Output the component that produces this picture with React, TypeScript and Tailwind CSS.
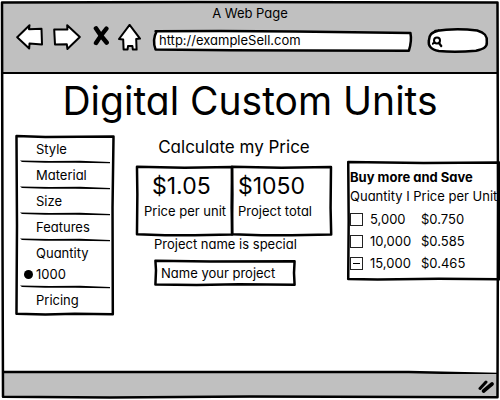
import { useEffect, useRef } from "react";
import type { ReactNode } from "react";

const FRAMES = {
  page: "M0.4 0.6 L40 0.5 L99.5 0.6 L99.6 50 L99.5 99.3 L50 99.1 L22 99.4 L0.6 99.2 L0.5 60 Z",
  menu: "M0.5 0.6 L30 1.1 L99.5 0.8 L98.5 40 L98.8 99 L60 98.8 L30 99.2 L0.5 98.8 L1 50 Z",
  card: "M1 1.2 L50 2.4 L99 1.5 L98.6 60 L99.2 98 L60 98.8 L30 99 L1 97.6 L1.4 40 Z",
  field: "M1 3 L40 6 L99 5 L98.6 50 L99 95 L60 93 L30 96 L1 94 L1.4 40 Z",
  address: "M1 6 Q30 2 55 7 L99.4 14 Q100 50 98.8 94 L60 93 L30 92 L1 89 Q-0.4 45 1.4 6 Z",
  search: "M12 12 Q45 0 82 10 C94 18 99 30 98 55 C99 78 92 84 80 91 Q45 99 18 92 C4 86 0 70 1.5 50 C2 28 5 18 18 10",
  offer: "M0.8 0.9 L50 1.6 L99.4 1.2 L99.2 60 L99.4 98.6 L60 98.2 L20 98.8 L0.8 98.4 L1.1 50 Z",
};

function Frame({ shape, fill = "none", stroke = 2.5 }: { shape: keyof typeof FRAMES; fill?: string; stroke?: number }) {
  return (
    <svg
      className="pointer-events-none absolute inset-0 h-full w-full overflow-visible"
      viewBox="0 0 100 100"
      preserveAspectRatio="none"
      aria-hidden="true"
    >
      <path d={FRAMES[shape]} fill={fill} stroke="#000" strokeWidth={stroke} strokeLinejoin="round" strokeLinecap="round" vectorEffect="non-scaling-stroke" />
    </svg>
  );
}

function Divider() {
  return (
    <svg className="block h-0.5 w-full overflow-visible" viewBox="0 0 90 2" preserveAspectRatio="none" aria-hidden="true">
      <path d="M0 -0.4 L30 0 L60 -0.2 L90 1 L90 2.2 L55 1.8 L25 1.7 L2 0.9 Z" fill="#000" />
    </svg>
  );
}

function NavButton({ label, className, children }: { label: string; className: string; children: ReactNode }) {
  return (
    <button type="button" aria-label={label} className={className}>
      {children}
    </button>
  );
}

function MenuItem({ children }: { children: ReactNode }) {
  return (
    <button type="button" className="block h-6 w-full pl-4 text-left">
      {children}
    </button>
  );
}

function Tier({ quantity, price, partial = false }: { quantity: string; price: string; partial?: boolean }) {
  const box = useRef<HTMLInputElement>(null);
  useEffect(() => {
    if (box.current) box.current.indeterminate = partial;
  }, [partial]);
  return (
    <label className="flex h-[22px] items-center">
      <span className="mr-[7px] grid shrink-0 place-items-center">
        <input ref={box} type="checkbox" className="col-start-1 row-start-1 h-[13px] w-[13px] appearance-none border border-[#222] bg-white" />
        {partial && <span className="pointer-events-none col-start-1 row-start-1 h-px w-[7px] bg-black" />}
      </span>
      <span className="w-[51px]">{quantity}</span>
      <span>{price}</span>
    </label>
  );
}

export default function App() {
  return (
    <div className="relative flex min-h-screen flex-col bg-white p-0.5 font-[Inter,sans-serif] text-[13px] leading-4 text-black [font-feature-settings:'cv11']">
      <header className="h-[70px] bg-[#c0c0c0] pt-[3px]">
        <div className="text-center">A Web Page</div>
        <div className="mt-[3px] flex items-start pr-2.5 pl-3.5">
          <NavButton label="Back" className="mr-2.5">
            <svg width="27" height="26" viewBox="0 0 27 26" fill="#fff" stroke="#000" strokeWidth="2" strokeLinejoin="round">
              <path d="M1.2 13.2 L13.5 1.2 L13 5.2 L25.5 4.8 L26 20.4 L13.5 19.6 L13.2 24.4 Z" />
            </svg>
          </NavButton>
          <NavButton label="Forward" className="mr-3">
            <svg width="28" height="26" viewBox="0 0 28 26" fill="#fff" stroke="#000" strokeWidth="2" strokeLinejoin="round">
              <path d="M1.2 5.6 L14.4 5.4 L14.2 1.2 L26.8 13 L14.4 25 L13.8 20.2 L2 20.4 Z" />
            </svg>
          </NavButton>
          <NavButton label="Stop" className="mr-2">
            <svg width="17" height="26" viewBox="0 0 17 26" fill="none" stroke="#000" strokeLinecap="round">
              <path d="M3 4.4 Q7 11 13.6 18.6" strokeWidth="4.6" />
              <path d="M13.4 4.6 Q8 11 3 19" strokeWidth="4.4" />
            </svg>
          </NavButton>
          <NavButton label="Home" className="mr-3">
            <svg width="23" height="27" viewBox="0 0 23 27" fill="#fff" stroke="#000" strokeWidth="2" strokeLinejoin="round">
              <path d="M11.6 0.8 L22 14.6 L18.2 15 L18.6 25.6 L14.8 25.4 L14.4 22 L10 22 L9.6 25.4 L5.6 25.4 L5.2 15.6 L1 15 Z" />
            </svg>
          </NavButton>
          <div className="relative mt-1.5 h-[22px] min-w-0 flex-1">
            <Frame shape="address" fill="#fff" />
            <input aria-label="Address" defaultValue="http://exampleSell.com" className="relative h-5 w-full bg-transparent pl-1.5 outline-none" />
          </div>
          <div className="relative mt-1 ml-4 h-[25px] w-[60px] shrink-0">
            <Frame shape="search" fill="#fff" />
            <svg className="absolute top-2 left-1" width="12" height="12" viewBox="0 0 12 12" fill="none" stroke="#000" strokeLinecap="round" aria-hidden="true">
              <circle cx="5" cy="4.4" r="3" strokeWidth="2" />
              <path d="M0.8 7.6 L2.6 6.6 M7 7 L9.2 10" strokeWidth="2.2" />
            </svg>
            <input aria-label="Search" type="text" className="relative h-full w-full bg-transparent pr-2 pl-4 outline-none" />
          </div>
        </div>
      </header>
      <div className="h-0.5 bg-black" />

      <main className="flex-1">
        <h1 className="pt-[3px] text-center text-[39px] leading-[48px]">Digital Custom Units</h1>
        <div className="mt-2 flex items-start">
          <nav aria-label="Options" className="relative mt-0.5 ml-3.5 h-[181px] w-[98px] shrink-0 px-1 pt-0.5">
            <Frame shape="menu" />
            <div className="relative">
              <MenuItem>Style</MenuItem>
              <Divider />
              <MenuItem>Material</MenuItem>
              <Divider />
              <MenuItem>Size</MenuItem>
              <Divider />
              <MenuItem>Features</MenuItem>
              <Divider />
              <MenuItem>Quantity</MenuItem>
              <label className="flex h-[21px] items-start pt-px pl-1">
                <input type="radio" name="quantity" defaultChecked className="mt-1 mr-[3px] h-[9px] w-[9px] appearance-none rounded-full bg-black" />
                1000
              </label>
              <Divider />
              <MenuItem>Pricing</MenuItem>
            </div>
          </nav>

          <section className="mx-[15px] min-w-0 flex-1 pl-[7px]">
            <h2 className="pt-0.5 text-center text-[17px] leading-6">Calculate my Price</h2>
            <div className="mt-[7px] grid h-[70px] grid-cols-[95fr_101fr]">
              <div className="relative -mr-0.5 pt-1.5 pl-2">
                <Frame shape="card" />
                <div className="pl-2 text-[23px] leading-7">$1.05</div>
                <div className="mt-[3px] whitespace-nowrap">Price per unit</div>
              </div>
              <div className="relative pt-1.5 pl-[7px]">
                <Frame shape="card" />
                <div className="text-[23px] leading-7">$1050</div>
                <div className="mt-[3px] whitespace-nowrap">Project total</div>
              </div>
            </div>
            <label htmlFor="project" className="block pl-[18px] whitespace-nowrap">Project name is special</label>
            <div className="relative mt-2 mr-9 ml-[18px] h-[26px]">
              <Frame shape="field" />
              <input id="project" type="text" placeholder="Name your project" className="relative h-full w-full bg-transparent pl-[7px] outline-none placeholder:text-black placeholder:opacity-100" />
            </div>
          </section>

          <section className="relative -mr-0.5 mt-7 h-[120px] w-[153px] shrink-0 pt-2 pl-[3px]">
            <Frame shape="offer" />
            <h3 className="relative font-bold whitespace-nowrap">Buy more and Save</h3>
            <p className="relative mt-[3px] whitespace-nowrap">Quantity I Price per Unit</p>
            <div className="relative mt-1">
              <Tier quantity="5,000" price="$0.750" />
              <Tier quantity="10,000" price="$0.585" />
              <Tier quantity="15,000" price="$0.465" partial />
            </div>
          </section>
        </div>
      </main>

      <svg className="block h-[3px] w-full overflow-visible" viewBox="0 0 100 3" preserveAspectRatio="none" aria-hidden="true">
        <path d="M0 1 L82 1 L100 3 L100 6 L0 6 Z" fill="#c0c0c0" />
        <path d="M0 1 L82 1 L100 3" fill="none" stroke="#000" strokeWidth="2.5" vectorEffect="non-scaling-stroke" />
      </svg>
      <footer className="flex h-6 items-center justify-end bg-[#c0c0c0] pr-1">
        <svg width="16" height="13" viewBox="0 0 16 13" fill="none" stroke="#000" strokeLinecap="round" aria-hidden="true">
          <path d="M2 8.5 L8 2" strokeWidth="3" />
          <path d="M5.6 11 L14 4" strokeWidth="3.6" />
        </svg>
      </footer>
      <Frame shape="page" />
    </div>
  );
}
